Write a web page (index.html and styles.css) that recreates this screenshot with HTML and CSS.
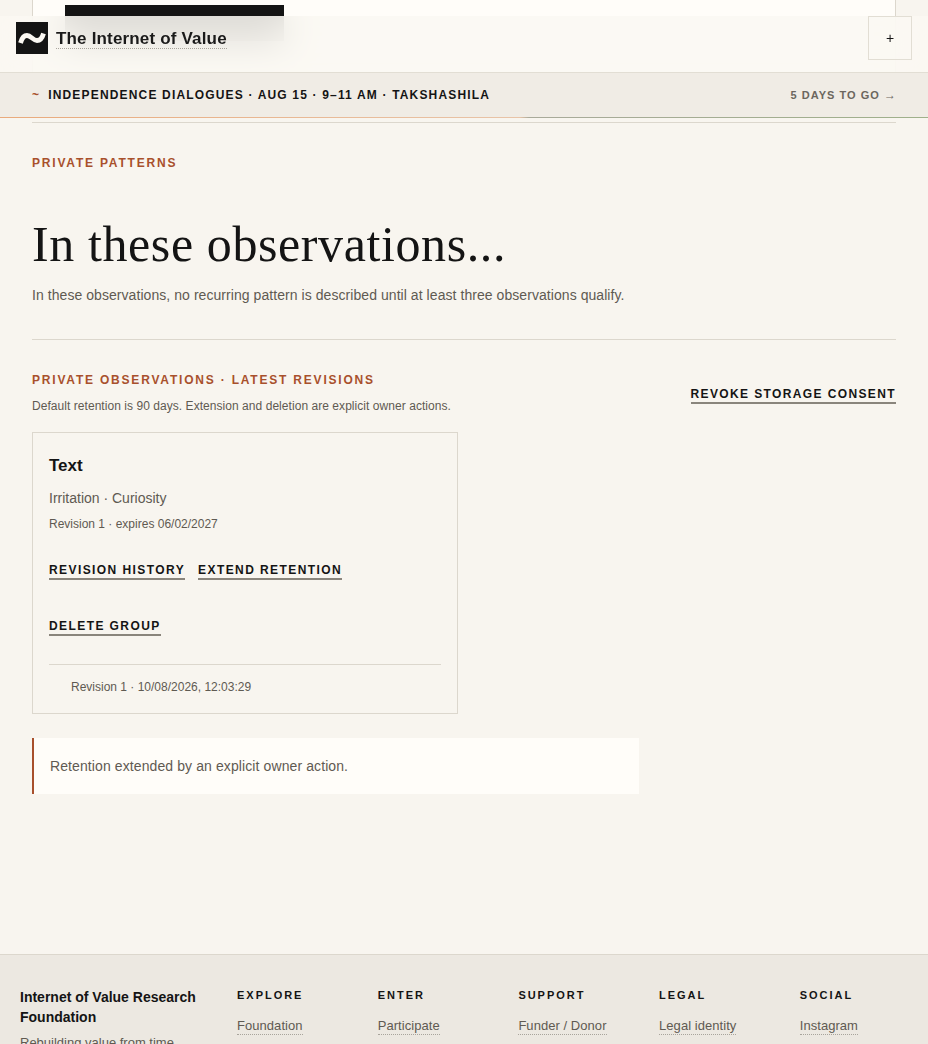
FILE: index.html
```html
<!DOCTYPE html>
<html lang="en">
<head>
<meta charset="utf-8">
<title>Private patterns</title>
<link rel="stylesheet" href="styles.css">
</head>
<body>
<div class="stage">
  <div class="peek"><div class="peek-card"><div class="peek-bar"></div></div></div>
  <header class="topbar">
    <a class="brand" href="#">
      <svg class="mark" viewBox="0 0 32 32" aria-hidden="true"><rect width="32" height="32" fill="#141414"/><path d="M4.5 21 C6 15.5 8 13.5 11 13.5 C15 13.5 17 18.5 21 18.5 C24 18.5 26 17 27.5 11.5" fill="none" stroke="#fbf8f2" stroke-width="4.8"/></svg>
      <span class="brand-name">The Internet of Value</span>
    </a>
    <button class="menu" type="button">+</button>
  </header>
</div>
<div class="announce">
  <span class="announce-main"><span class="tilde">~</span>INDEPENDENCE DIALOGUES · AUG 15 · 9–11 AM · TAKSHASHILA</span>
  <span class="announce-count">5 DAYS TO GO <span class="arrow">→</span></span>
</div>
<main class="page">
  <section class="intro">
    <p class="eyebrow">PRIVATE PATTERNS</p>
    <h1>In these observations...</h1>
    <p class="lede">In these observations, no recurring pattern is described until at least three observations qualify.</p>
  </section>
  <section class="list">
    <div class="list-head">
      <div>
        <h2 class="eyebrow">PRIVATE OBSERVATIONS · LATEST REVISIONS</h2>
        <p class="note">Default retention is 90 days. Extension and deletion are explicit owner actions.</p>
      </div>
      <a class="action" href="#">REVOKE STORAGE CONSENT</a>
    </div>
    <article class="card">
      <h3>Text</h3>
      <p class="tags">Irritation · Curiosity</p>
      <p class="meta">Revision 1 · expires 06/02/2027</p>
      <div class="actions"><a class="action" href="#">REVISION HISTORY</a><a class="action" href="#">EXTEND RETENTION</a></div>
      <div class="actions second"><a class="action" href="#">DELETE GROUP</a></div>
      <p class="history">Revision 1 · 10/08/2026, 12:03:29</p>
    </article>
    <p class="notice">Retention extended by an explicit owner action.</p>
  </section>
</main>
<footer class="footer">
  <div class="foot-brand">
    <strong>Internet of Value Research Foundation</strong>
    <p>Rebuilding value from time</p>
  </div>
  <div class="foot-col"><h4>EXPLORE</h4><a href="#">Foundation</a></div>
  <div class="foot-col"><h4>ENTER</h4><a href="#">Participate</a></div>
  <div class="foot-col"><h4>SUPPORT</h4><a href="#">Funder / Donor</a></div>
  <div class="foot-col"><h4>LEGAL</h4><a href="#">Legal identity</a></div>
  <div class="foot-col"><h4>SOCIAL</h4><a href="#">Instagram</a></div>
</footer>
</body>
</html>
```
FILE: styles.css
```css
* { box-sizing: border-box; }
html, body { margin: 0; height: 1044px; overflow: hidden; }
body { background: #f8f5ef; color: #141414; font-family: "Liberation Sans", Arial, sans-serif; }
a { color: inherit; text-decoration: none; }
p, h1, h2, h3, h4 { margin: 0; }

.stage { position: relative; height: 73px; }
.peek { height: 73px; padding: 0 32px; overflow: hidden; }
.peek-card { height: 73px; background: #fffdf9; border: 1px solid #dcd7cd; border-top: 0; padding: 5px 0 0 32px; }
.peek-bar { width: 219px; height: 36px; background: #141414; }
.topbar { position: absolute; left: 0; right: 0; top: 16px; height: 57px; padding: 0 16px; display: flex; justify-content: space-between; background: rgba(250,248,242,.88); backdrop-filter: blur(18px); border-bottom: 1px solid #e2ded4; }
.brand { display: flex; align-items: flex-start; gap: 8px; padding-top: 6px; }
.mark { width: 32px; height: 32px; display: block; }
.brand-name { font-size: 17px; font-weight: 700; line-height: 19px; margin-top: 7px; letter-spacing: .17px; color: #1a1a1a; border-bottom: 1px dotted #a8a49c; }
.menu { width: 44px; height: 44px; background: transparent; border: 1px solid #e2ded4; font: 14px/1 "Liberation Sans", sans-serif; color: #141414; padding: 0; }

.announce { position: relative; height: 45px; padding: 0 32px 1px; display: flex; align-items: center; justify-content: space-between; background: #f0ece5; }
.announce::after { content: ""; position: absolute; left: 0; right: 0; bottom: 0; height: 1px; background: linear-gradient(90deg, #e9aa7c, #e8c4a8 56%, #a9aa9a 57%, #9fb08a); }
.announce-main { font-size: 12px; font-weight: 700; letter-spacing: 1.17px; color: #141414; }
.tilde { color: #a8502c; margin-right: 8px; }
.announce-count { font-size: 11px; font-weight: 700; letter-spacing: 1.03px; color: #6b665e; }
.arrow { font-weight: 400; font-size: 12px; letter-spacing: 0; }

.page { padding: 4px 32px 0; height: 836px; }
.intro { border-top: 1px solid #dcd7cd; border-bottom: 1px solid #dcd7cd; height: 218px; padding-top: 33px; }
.eyebrow { font-size: 12px; line-height: 14px; font-weight: 700; letter-spacing: 1.8px; color: #a8502c; }
h1 { font-family: "Liberation Serif", Georgia, serif; font-weight: 400; font-size: 50px; line-height: 56px; letter-spacing: .6px; margin-top: 46px; color: #141414; }
.lede { font-size: 14px; line-height: 22px; margin-top: 12px; letter-spacing: .06px; color: #5f5a52; }

.list { padding-top: 33px; }
.list-head { display: flex; justify-content: space-between; align-items: center; }
.note { font-size: 12px; line-height: 18px; margin-top: 10px; letter-spacing: .05px; color: #5f5a52; }
.action { display: inline-block; font-size: 12px; line-height: 14px; font-weight: 700; letter-spacing: 1.38px; color: #141414; border-bottom: 2px solid #8a857c; padding-bottom: 1px; }
.list-head .action { margin-top: 3px; }
.card { width: 426px; height: 282px; margin-top: 17px; border: 1px solid #dcd7cd; padding: 22px 16px 0; }
h3 { font-size: 17px; line-height: 22px; font-weight: 700; }
.tags { font-size: 14px; line-height: 20px; margin-top: 11px; color: #5f5a52; }
.meta { font-size: 12px; line-height: 18px; margin-top: 7px; color: #5f5a52; }
.actions { display: flex; gap: 13px; margin-top: 30px; }
.actions .action { letter-spacing: 1.42px; }
.actions.second { margin-top: 39px; }
.history { margin-top: 28px; padding: 13px 0 0 22px; border-top: 1px solid #dcd7cd; font-size: 12px; line-height: 18px; color: #5f5a52; }
.notice { width: 607px; height: 56px; margin-top: 24px; padding-left: 16px; background: #fffdf9; border-left: 2px solid #a8502c; font-size: 14px; line-height: 56px; letter-spacing: .1px; color: #5f5a52; }

.footer { height: 90px; overflow: hidden; background: #ece8e1; border-top: 1px solid #dcd7cd; padding: 32px 20px 0; display: grid; grid-template-columns: 217px repeat(5, 140.7px); }
.foot-brand strong { display: block; font-size: 14px; line-height: 20px; width: 190px; }
.foot-brand p { font-size: 13px; line-height: 20px; margin-top: 6px; color: #5f5a52; }
.foot-col h4 { font-size: 11px; line-height: 16px; font-weight: 700; letter-spacing: 1.98px; }
.foot-col a { display: inline-block; margin-top: 14px; font-size: 13px; line-height: 17px; letter-spacing: .05px; color: #5f5a52; border-bottom: 1px dotted #a8a49c; }
```
